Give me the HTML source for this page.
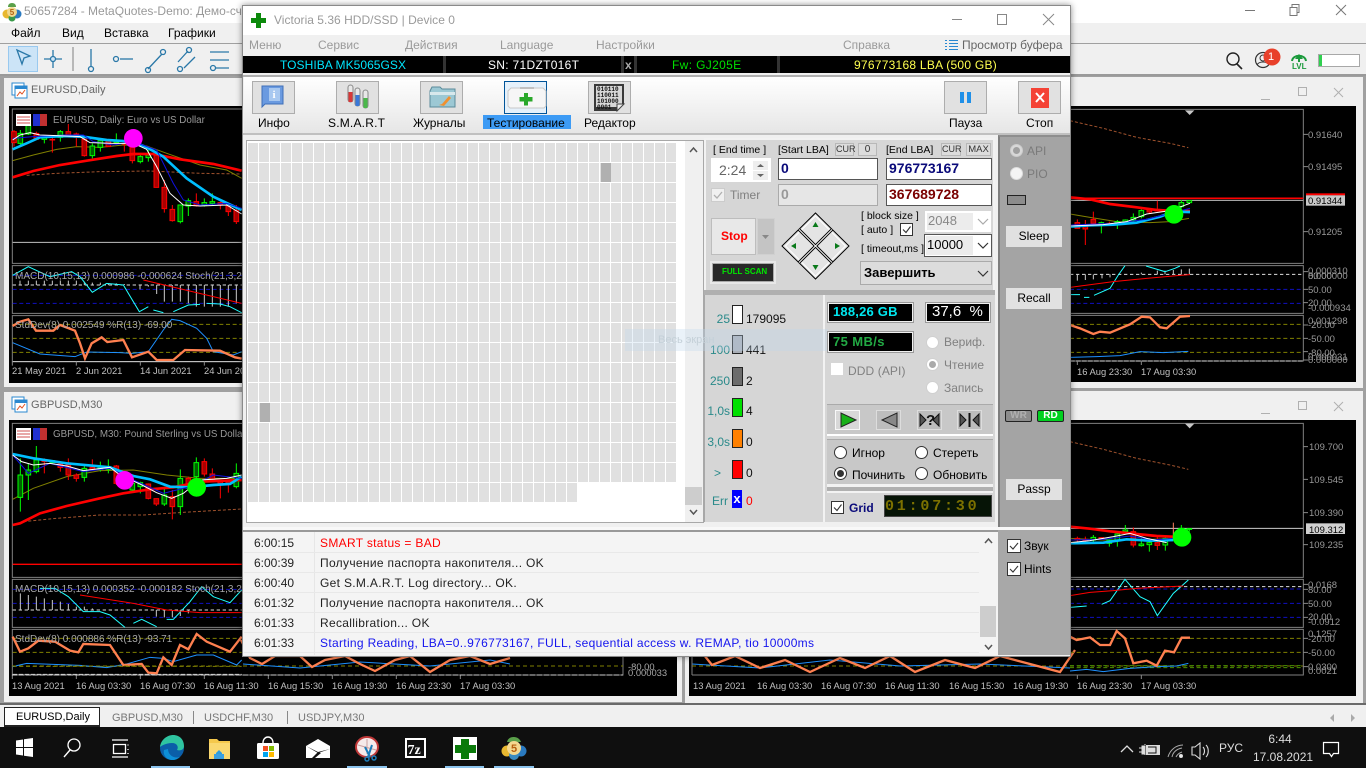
<!DOCTYPE html>
<html lang="ru"><head><meta charset="utf-8"><title>Victoria</title>
<style>
html,body{margin:0;padding:0;width:1366px;height:768px;overflow:hidden;background:#a0a0a0}
body{position:relative;font:12px/14px "Liberation Sans","Noto Sans CJK SC",sans-serif;color:#000}
div,span,svg{position:absolute;box-sizing:border-box}
.t{white-space:nowrap}
.btn{background:#e1e1e1;border:1px solid #adadad}
.g{color:#808080}
.rad{width:13px;height:13px;border-radius:50%;background:#fff;border:1px solid #8a8a8a}
.rad.d{background:#f3f3f3;border-color:#d0d0d0}
.dot{width:7px;height:7px;border-radius:50%}
.cb{width:14px;height:14px;background:#fff;border:1px solid #333}
.blk{background:#000;border:1px solid #f0f0f0;outline:1px solid #9a9a9a}
.cell{width:10px;height:19px;background:#b0b0b0}
.sm{font-size:10px;line-height:11px;text-align:center;background:#dcdcdc;border:1px solid #b8b8b8;color:#333}
.inp{background:#fff;border:1px solid #555;font-weight:bold;font-size:14px;line-height:18px;padding-left:2px}
.log{left:320px;font-size:12px;letter-spacing:.32px;white-space:nowrap}
.tm{left:254px;font-size:12px;white-space:nowrap;color:#222}
.sep{height:1px;background:#e8e8e8;left:244px;width:735px}
.side{left:1006px;width:56px;height:21px;background:#e1e1e1;text-align:center;line-height:21px;font-size:12px}
.num{left:746px;font-size:12px;color:#111}
.lab{width:30px;text-align:right;left:700px;font-size:12px;color:#2a8a8a}
.box{left:732px;width:11px;height:19px;border:1px solid #222}
.tab{top:711px;color:#777;font-size:11px;white-space:nowrap}
.v{width:1px;top:711px;height:13px;background:#888}
.br{font-size:10.5px}
</style></head><body>

<!-- MT4 chrome -->
<div style="left:0;top:0;width:1366px;height:23px;background:#fff"></div>
<div style="left:0;top:23px;width:1366px;height:20px;background:#f0f0f0"></div>
<div style="left:0;top:43px;width:1366px;height:1px;background:#a0a0a0"></div>
<div style="left:0;top:44px;width:1366px;height:30px;background:#f0f0f0"></div>
<div style="left:0;top:74px;width:1366px;height:2px;background:#9a9a9a"></div>

<svg style="left:2px;top:2px" width="20" height="20" viewBox="0 0 20 20"><path d="M10 1c3 0 4 2 4 4H6c0-2 1-4 4-4z" fill="#5aa04a"/><circle cx="5" cy="12" r="4.5" fill="#e8b830"/><circle cx="15" cy="12" r="4.5" fill="#2a7ac0"/><circle cx="10" cy="16" r="3.5" fill="#3a9a4a"/><circle cx="10" cy="10" r="5" fill="#f0d890"/><text x="10" y="13" font-size="8" font-weight="bold" text-anchor="middle" fill="#b06010" font-family="Liberation Sans">5</text></svg>
<div class="t" style="left:24px;top:4px;color:#999;font-size:12px">50657284 - MetaQuotes-Demo: Демо-счёт</div>
<div class="t" style="left:11px;top:26px">Файл</div>
<div class="t" style="left:62px;top:26px">Вид</div>
<div class="t" style="left:104px;top:26px">Вставка</div>
<div class="t" style="left:168px;top:26px">Графики</div>

<div style="left:8px;top:46px;width:30px;height:26px;background:#cce4f7;border:1px solid #99c9ef"></div>
<svg style="left:0;top:44px" width="243" height="30" viewBox="0 0 243 30" fill="none" stroke="#2a78a8" stroke-width="1.3">
<path d="M17 6l13 6-6 2-2 6z"/>
<path d="M53 6v18M44 15h18"/><circle cx="53" cy="15" r="2.5" fill="#cfe6f7"/>
<path d="M73 3v24" stroke="#999"/>
<path d="M91 5v18"/><circle cx="91" cy="25" r="2.5"/>
<path d="M120 15h13"/><circle cx="116" cy="15" r="2.5"/>
<path d="M148 25l14-15"/><circle cx="148" cy="26" r="2.5"/><circle cx="163" cy="8" r="2.5"/>
<path d="M178 18l10-11M184 24l11-11"/><circle cx="189" cy="6" r="2.5"/><circle cx="180" cy="25" r="2.5"/>
<path d="M210 8h19M210 16h19M216 24h13"/><circle cx="213" cy="24" r="2.5"/>
</svg>

<svg style="left:1240px;top:0" width="126" height="23" fill="none" stroke="#777"><path d="M5 10.500h10"/><path d="M50 7.500h7v8h-7zM52 7V4.500h7v8h-2"/><path d="M96 5l10 10M106 5l-10 10"/></svg>
<svg style="left:1222px;top:48px" width="144" height="26" viewBox="0 0 144 26" fill="none">
<circle cx="11" cy="11" r="6" stroke="#222" stroke-width="1.4"/><path d="M15 16l5 5" stroke="#222" stroke-width="1.6"/>
<circle cx="41" cy="12" r="7.500" stroke="#333" stroke-width="1.2"/><circle cx="41" cy="10" r="3" stroke="#333"/><path d="M35 17c2-4 10-4 12 0" stroke="#333"/>
<circle cx="50" cy="9" r="8.500" fill="#e8402a"/>
<path d="M70 13c1-7 13-7 14 0" stroke="#1b9a3c" stroke-width="2"/><path d="M77 6l-4 5h8z" fill="#1b9a3c"/><path d="M77 10v4" stroke="#1b9a3c" stroke-width="2"/>
<rect x="96.500" y="6.500" width="41" height="12" fill="#fff" stroke="#a8a8a8"/><rect x="97" y="7" width="3" height="11" fill="#30d050"/>
</svg>
<div class="t" style="left:1268px;top:50px;color:#fff;font-size:11px">1</div>
<div class="t" style="left:1292px;top:62px;color:#1b9a3c;font-size:8px;line-height:9px;font-weight:bold">LVL</div>

<!-- chart windows -->
<div style="left:3px;top:77px;width:680px;height:311px;background:#f0f0f0;border:1px solid #a0a0a0"></div>
<div style="left:685px;top:77px;width:678px;height:311px;background:#f0f0f0"></div>
<div style="left:3px;top:391px;width:680px;height:312px;background:#f0f0f0;border:1px solid #a0a0a0"></div>
<div style="left:685px;top:391px;width:678px;height:312px;background:#f0f0f0"></div>
<div style="left:9px;top:106px;width:668px;height:277px;background:#000"></div>
<div style="left:689px;top:106px;width:667px;height:276px;background:#000"></div>
<div style="left:9px;top:420px;width:668px;height:276px;background:#000"></div>
<div style="left:689px;top:420px;width:667px;height:276px;background:#000"></div>

<div class="t" style="left:31px;top:83px;color:#666;font-size:11px;letter-spacing:.05px">EURUSD,Daily</div>
<div class="t" style="left:31px;top:398px;color:#666;font-size:11px;letter-spacing:.05px">GBPUSD,M30</div>
<svg style="left:11px;top:82px" width="17" height="17" viewBox="0 0 17 17"><rect x="1" y="1" width="12" height="12" fill="#fff" stroke="#2a88d0"/><rect x="4" y="4" width="12" height="12" fill="#fff" stroke="#2a88d0"/><rect x="4" y="4" width="12" height="3" fill="#2a88d0"/><path d="M6 14l3-4 2 2 3-4" stroke="#e05020" fill="none"/></svg>
<svg style="left:11px;top:396px" width="17" height="17" viewBox="0 0 17 17"><rect x="1" y="1" width="12" height="12" fill="#fff" stroke="#2a88d0"/><rect x="4" y="4" width="12" height="12" fill="#fff" stroke="#2a88d0"/><rect x="4" y="4" width="12" height="3" fill="#2a88d0"/><path d="M6 14l3-4 2 2 3-4" stroke="#e05020" fill="none"/></svg>
<svg style="left:1256px;top:84px" width="96" height="20" fill="none" stroke="#b0b0b0"><path d="M5 15.500h9"/><path d="M42.500 3.500h8v8h-8z"/><path d="M78 4l9 9M87 4l-9 9"/></svg>
<svg style="left:1256px;top:398px" width="96" height="20" fill="none" stroke="#b0b0b0"><path d="M5 15.500h9"/><path d="M42.500 3.500h8v8h-8z"/><path d="M78 4l9 9M87 4l-9 9"/></svg>

<svg style="left:0;top:0" width="1366" height="768" viewBox="0 0 1366 768" font-family="Liberation Sans" font-size="10">
<!-- ========== TOP LEFT ========== -->
<g transform="translate(0,90) scale(.33333)" fill="none" stroke-width="3">
<path d="M37 57H1869V520H37zM37 527H1869V670H37zM37 677H1869V815H37z" stroke="#808080"/>
<path d="M38 457H725" stroke="#c0c0c0"/>
<path d="M80 256L170 250 300 245 450 243 600 250 725 252" stroke="#a0522d" stroke-dasharray="9 6"/>
<path d="M38 212L100 195 170 178 230 170 300 172 370 165 440 168 500 190 600 225 680 240 725 265" stroke="#808000"/>
<path d="M42 120V170M109 125V150M157 135V188M205 102V135M229 128V170M253 135V200M325 150V170M373 155V185M397 165V220M469 195V292M493 270V368M517 345V395M589 310V350M661 335V358M685 340V378M709 345V402" stroke="#f00"/>
<path d="M35 125h14V158h-14zM102 130h14V148h-14zM150 148h14V150h-14zM198 125h14V135h-14zM222 132h14V142h-14zM246 148h14V197h-14zM318 152h14V170h-14zM366 160h14V162h-14zM390 172h14V212h-14zM462 195h14V292h-14zM486 292h14V356h-14zM510 358h14V392h-14zM582 335h14V347h-14zM654 338h14V345h-14zM678 348h14V365h-14zM702 362h14V395h-14z" stroke="#f00" fill="#a80000"/>
<path d="M61 120V165M85 100V135M133 135V160M181 120V155M277 160V205M301 145V185M349 130V160M421 195V220M445 180V215M541 345V400M565 325V378M613 325V350M637 310V345" stroke="#0f0"/>
<path d="M54 130h14V160h-14zM78 105h14V132h-14zM126 140h14V148h-14zM174 125h14V142h-14zM270 168h14V197h-14zM294 152h14V172h-14zM342 150h14V158h-14zM414 200h14V215h-14zM438 195h14V203h-14zM534 345h14V395h-14zM558 332h14V348h-14zM606 338h14V345h-14zM630 335h14V340h-14z" stroke="#0f0" fill="#006000"/>
<path d="M38 262L100 243 180 225 260 212 350 198 400 192 460 192 540 208 640 222 725 242" stroke="#f00" stroke-width="8"/>
<path d="M38 178L80 160 120 142 190 138 250 140 320 150 400 155 440 172 490 200 560 265 640 320 725 360" stroke="#00bfff" stroke-width="8"/>
<path d="M38 145L100 140 200 135 250 135 280 155 340 165 400 155 470 180 520 280 550 330 600 345 680 340 725 355" stroke="#1010e0" stroke-width="3"/>
<path d="M38 150L60 135 90 128 120 135 200 138 240 140 270 158 340 160 400 160 440 178 470 230 510 310 550 345 600 348 680 345 725 372" stroke="#fff" stroke-width="3"/>
<path d="M38 556H725M38 598H725M38 640H725" stroke="#1010c0" stroke-dasharray="12 8"/>
<path d="M38 585H725" stroke="#ddd" stroke-dasharray="10 8"/>
<path d="M60 585V572M85 585V572M109 585V572M133 585V572M157 585V572M181 585V572M205 585V572M229 585V572M253 585V575M277 585V578M301 585V578M325 585V580M349 585V580M373 585V582M420 585V598M445 585V590M470 585V612M493 585V635M517 585V635M541 585V635M565 585V640M589 585V650M613 585V650M637 585V650M661 585V650M685 585V650M709 585V640" stroke="#ccc"/>
<path d="M38 556L85 530 150 560 215 545 240 560 277 607 320 580 370 585 418 665 445 650M460 660L490 668M520 665L565 645 600 643M620 640L660 642 690 650 725 668" stroke="#2ff"/>
<path d="M430 570L725 640" stroke="#f00"/>
<path d="M38 703H725M38 745H725M38 787H725" stroke="#808000" stroke-dasharray="12 8"/>
<path d="M38 815H725" stroke="#ccc"/>
<path d="M38 758L120 792 225 800 260 786 360 788 395 790 445 785 490 720 515 688 540 692 590 715 620 745 640 785 700 795 725 785" stroke="#1e90ff"/>
<path d="M38 708L60 695 85 688 108 722 160 722 180 705 225 722 240 760 255 805 275 760 305 742 322 756 370 750 396 802 445 785 470 810 520 810 555 780 660 782 705 802 725 806" stroke="#ff8050" stroke-width="7"/>
<path d="M37 815v12M229 815v12M421 815v12M613 815v12" stroke="#888"/>
<circle cx="400" cy="145" r="28" fill="#f0f" stroke="none"/>
</g>
<g fill="#a8a8a8" stroke="none">
<text x="15" y="279">MACD(10,15,13)  0.000986 -0.000624 Stoch(21,3,2) 3</text>
<text x="15" y="328">StdDev(8) 0.002549 %R(13) -69.00</text>
<text x="12" y="374" font-size="9.400" fill="#c0c0c0">21 May 2021</text><text x="76" y="374" font-size="9.400" fill="#c0c0c0">2 Jun 2021</text><text x="140" y="374" font-size="9.400" fill="#c0c0c0">14 Jun 2021</text><text x="204" y="374" font-size="9.400" fill="#c0c0c0">24 Jun 2021</text>
<text x="53" y="123" font-size="9.800" fill="#999">EURUSD, Daily:  Euro vs US Dollar</text>
<text x="53" y="437" font-size="9.800" fill="#999">GBPUSD, M30:  Pound Sterling vs US Dollar</text>
</g>
<g>
<rect x="16" y="114" width="15" height="12" fill="#fff"/><path d="M17 117h13M17 120h13M17 123h13" stroke="#d05050"/>
<rect x="33" y="114" width="7" height="12" fill="#2030d0"/><rect x="40" y="114" width="7" height="12" fill="#c03030"/>
<rect x="16" y="428" width="15" height="12" fill="#fff"/><path d="M17 431h13M17 434h13M17 437h13" stroke="#d05050"/>
<rect x="33" y="428" width="7" height="12" fill="#2030d0"/><rect x="40" y="428" width="7" height="12" fill="#c03030"/>
</g>

<!-- ========== BOTTOM LEFT ========== -->
<g transform="translate(0,380) scale(.33333)" fill="none" stroke-width="3">
<path d="M37 130H1869V592H37zM37 598H1869V742H37zM37 748H1869V885H37z" stroke="#808080"/>
<path d="M38 553H725" stroke="#f00" stroke-width="4"/>
<path d="M70 425L170 415 300 405 430 405 550 397 725 387" stroke="#a0522d" stroke-dasharray="9 6"/>
<path d="M38 358L100 325 200 290 300 272 400 270 500 285 600 295 725 295" stroke="#808000"/>
<path d="M133 235V280M181 245V275M205 235V300M229 280V305M277 238V270M349 255V315M373 280V310M445 310V358M469 355V378M517 330V418M565 290V325M613 235V290M637 265V300M661 300V355M685 300V338" stroke="#f00"/>
<path d="M126 240h14V245h-14zM174 252h14V262h-14zM198 255h14V285h-14zM222 285h14V295h-14zM270 262h14V268h-14zM342 258h14V310h-14zM366 285h14V300h-14zM438 312h14V355h-14zM462 356h14V372h-14zM510 350h14V380h-14zM558 295h14V320h-14zM606 245h14V282h-14zM630 282h14V298h-14zM654 305h14V310h-14zM678 305h14V310h-14z" stroke="#f00" fill="#a80000"/>
<path d="M61 235V395M85 250V360M109 198V280M157 240V250M253 255V305M301 245V275M325 238V280M397 305V335M421 305V340M493 320V378M541 268V405M589 232V350M709 250V325" stroke="#0f0"/>
<path d="M54 285h14V352h-14zM78 270h14V285h-14zM102 240h14V275h-14zM150 242h14V248h-14zM246 265h14V292h-14zM294 262h14V268h-14zM318 262h14V268h-14zM390 310h14V330h-14zM414 308h14V320h-14zM486 345h14V372h-14zM534 295h14V380h-14zM582 248h14V290h-14zM702 280h14V320h-14z" stroke="#0f0" fill="#006000"/>
<path d="M38 435L60 430 120 400 200 378 300 355 370 340 450 328 520 322 600 305 725 300" stroke="#f00" stroke-width="8"/>
<path d="M38 222L100 235 200 250 330 262 400 288 450 298 510 320 570 322 640 315 690 312 725 290" stroke="#00bfff" stroke-width="8"/>
<path d="M38 225L85 280 150 250 250 275 330 265 400 300 490 340 570 320 640 285 725 295" stroke="#1010e0"/>
<path d="M38 225L65 245 100 255 150 250 200 258 250 272 330 262 360 285 420 312 470 338 515 355 550 340 600 300 680 295 725 285" stroke="#fff"/>
<path d="M38 628H725M38 670H725M38 712H725" stroke="#1010c0" stroke-dasharray="12 8"/>
<path d="M38 690H725" stroke="#ddd" stroke-dasharray="10 8"/>
<path d="M61 690V640M85 690V645M109 690V650M133 690V655M157 690V660M181 690V665M205 690V672M229 690V680M253 690V680M277 690V685M469 690V710M493 690V712M517 690V712M541 690V708M565 690V700" stroke="#ccc"/>
<path d="M120 625L165 625 205 650 250 695 300 695 330 705 375 742M400 730L425 718 470 740M500 718L520 718 570 665 605 620 640 650 690 668 725 630" stroke="#2ff"/>
<path d="M240 645L400 670 500 690 600 698 725 698" stroke="#f00"/>
<path d="M38 775H725M38 817H725M38 859H725" stroke="#808000" stroke-dasharray="12 8"/>
<path d="M38 883H725" stroke="#ccc" stroke-dasharray="14 4"/>
<path d="M38 860L80 850 240 856 320 863 380 852 450 832 490 835 520 845 590 825 640 825 710 855 725 840" stroke="#1e90ff"/>
<path d="M38 770L60 815 85 805 115 782 165 785 210 812 235 817 250 792 330 795 370 855 425 852 445 878 470 880 490 832 515 855 540 795 565 808 590 762 620 785 690 815 725 770" stroke="#ff8050" stroke-width="7"/>
<path d="M37 885v12M229 885v12M421 885v12M613 885v12M805 885v12M997 885v12M1189 885v12M1381 885v12" stroke="#888"/>
<circle cx="374" cy="301" r="28" fill="#f0f" stroke="none"/>
<circle cx="590" cy="322" r="28" fill="#0f0" stroke="none"/>
</g>
<g fill="#a8a8a8">
<text x="15" y="592">MACD(10,15,13)  0.000352 -0.000182 Stoch(21,3,2) 2</text>
<text x="15" y="642">StdDev(8) 0.000886 %R(13) -93.71</text>
<text x="628" y="670" font-size="9.400">-80.00</text><text x="628" y="676" font-size="9.400">0.000033</text>
<g font-size="9.400" fill="#c0c0c0">
<text x="12" y="689">13 Aug 2021</text><text x="76" y="689">16 Aug 03:30</text><text x="140" y="689">16 Aug 07:30</text><text x="204" y="689">16 Aug 11:30</text><text x="268" y="689">16 Aug 15:30</text><text x="332" y="689">16 Aug 19:30</text><text x="396" y="689">16 Aug 23:30</text><text x="460" y="689">17 Aug 03:30</text>
<text x="693" y="689">13 Aug 2021</text><text x="757" y="689">16 Aug 03:30</text><text x="821" y="689">16 Aug 07:30</text><text x="885" y="689">16 Aug 11:30</text><text x="949" y="689">16 Aug 15:30</text><text x="1013" y="689">16 Aug 19:30</text><text x="1077" y="689">16 Aug 23:30</text><text x="1141" y="689">17 Aug 03:30</text>
</g>
</g>
<!-- strips under Victoria -->
<g fill="none" stroke-width="1">
<path d="M12 675H623M692 675H1303" stroke="#ccc" stroke-dasharray="5 2"/>
<path d="M12 666H623M692 666H1303" stroke="#808000" stroke-dasharray="4 3"/>
<path d="M243 664L300 668 360 662 430 666 490 660 510 664" stroke="#1e90ff"/>
<path d="M692 664L760 668 830 660 900 666 980 664 1070 668" stroke="#1e90ff"/>
<path d="M241 640L250 658 262 664 275 656 300 656 312 667 325 660 345 656 360 664 375 671 395 660 410 656 430 672 450 660 470 656 490 664 510 658" stroke="#ff8050" stroke-width="2.300"/>
<path d="M692 640L712 665 735 656 760 668 785 660 810 672 840 658 865 668 890 656 915 672 945 660 975 668 1000 656 1030 664 1060 672 1075 650" stroke="#ff8050" stroke-width="2.300"/>
</g>
<path d="M692 423H1071M692 577H1071M692 579H1071M692 627H1071M692 629H1071M692 423V675M692 675H1303" fill="none" stroke="#808080"/>
<path d="M692 109H1071M692 263H1071M692 265H1071M692 109V361" fill="none" stroke="#808080"/>

<!-- ========== TOP RIGHT ========== -->
<g transform="translate(1070,80) scale(.33333)" fill="none" stroke-width="3">
<path d="M0 88H700V550H0M0 557H700V700H0M0 706H700V843H0" stroke="#808080"/>
<path d="M0 355H700" stroke="#f00" stroke-width="5"/>
<path d="M0 361H700" stroke="#bbb"/>
<path d="M345 91h28l-14 14z" fill="#c8c8c8" stroke="none"/>
<path d="M0 122L100 145 200 172 300 190 355 203" stroke="#a0522d" stroke-dasharray="9 6"/>
<path d="M0 402L60 412 140 425 240 428 300 425 357 415" stroke="#808000"/>
<path d="M22 418V445M46 420V495M70 395V432M118 425V438M238 385V400M262 362V395" stroke="#f00"/>
<path d="M15 428h14V445h-14zM39 435h14V447h-14zM63 418h14V430h-14zM111 430h14V434h-14zM231 390h14V396h-14zM255 388h14V393h-14z" stroke="#f00" fill="#a80000"/>
<path d="M94 425V460M142 420V447M166 418V432M190 400V425M214 388V415M334 360V385M358 360V370" stroke="#0f0"/>
<path d="M87 428h14V436h-14zM135 425h14V430h-14zM159 420h14V426h-14zM183 412h14V420h-14zM207 392h14V410h-14zM327 368h14V380h-14zM351 362h14V368h-14z" stroke="#0f0" fill="#004000"/>
<path d="M0 352L60 358 120 372 200 382 260 390 300 392 360 393" stroke="#f00" stroke-width="8"/>
<path d="M0 440L60 436 130 434 200 428 270 410 310 395 360 396" stroke="#00bfff" stroke-width="8"/>
<path d="M0 435L130 430 230 418 320 395 360 385" stroke="#1010e0"/>
<path d="M0 438L100 434 170 425 230 402 300 392 360 370" stroke="#fff"/>
<circle cx="312" cy="403" r="28" fill="#0f0" stroke="none"/>
<path d="M0 628H700M0 670H700" stroke="#1010c0" stroke-dasharray="12 8"/>
<path d="M0 583H700" stroke="#ddd" stroke-dasharray="10 8"/>
<path d="M22 583V602M46 583V600M70 583V598M96 583V595M120 583V592M214 583V578M262 583V572M285 583V572M310 583V570M334 583V568M358 583V566" stroke="#ccc"/>
<path d="M0 644L30 644M42 652L58 652M72 646L120 625 145 585 165 557M228 558L285 575 315 565 330 558" stroke="#2ff"/>
<path d="M0 622L130 605 230 595 330 586 360 584" stroke="#f00"/>
<path d="M0 733H700M0 775H700M0 817H700" stroke="#808000" stroke-dasharray="12 8"/>
<path d="M0 843H700" stroke="#ddd" stroke-dasharray="14 4"/>
<path d="M0 832L80 830 150 827 210 815 280 818 355 814" stroke="#1e90ff"/>
<path d="M0 735L30 745 70 762 90 755 120 758 180 733 215 710 240 712 270 742 290 745 330 710 360 708" stroke="#ff8050" stroke-width="7"/>
<path d="M22 843v12M214 843v12M700 163h14M700 260h14M700 455h14M700 575h14M700 628h14M700 668h14M700 735h14M700 775h14M700 815h14M700 840h14" stroke="#888"/>
<rect x="708" y="340" width="117" height="6" fill="#f00" stroke="none"/>
<rect x="708" y="346" width="117" height="31" fill="#c8c8c8" stroke="none"/>
</g>
<g fill="#999" font-size="9.500">
<text x="1308" y="138">0.91640</text><text x="1308" y="170">0.91495</text><text x="1308" y="235">0.91205</text>
<text x="1308" y="204" fill="#000">0.91344</text>
<text x="1308" y="274">0.000310</text><text x="1308" y="279">80.00</text><text x="1308" y="279">0.000000</text><text x="1308" y="293">50.00</text><text x="1308" y="306">20.00</text><text x="1308" y="311">-0.000934</text>
<text x="1308" y="324">0.001298</text><text x="1308" y="328">-20.00</text><text x="1308" y="342">-50.00</text><text x="1308" y="356">-80.00</text><text x="1308" y="360">0.000031</text><text x="1308" y="363">0.000000</text>
<text x="1077" y="375" font-size="9.400" fill="#c0c0c0">16 Aug 23:30</text><text x="1141" y="375" font-size="9.400" fill="#c0c0c0">17 Aug 03:30</text>
</g>

<!-- ========== BOTTOM RIGHT ========== -->
<g transform="translate(1070,390) scale(.33333)" fill="none" stroke-width="3">
<path d="M0 100H700V562H0M0 568H700V712H0M0 718H700V855H0" stroke="#808080"/>
<path d="M0 415H700" stroke="#ccc"/>
<path d="M345 101h28l-14 14z" fill="#c8c8c8" stroke="none"/>
<path d="M0 155L100 178 200 205 300 225 355 238" stroke="#a0522d" stroke-dasharray="9 6"/>
<path d="M0 445L100 450 200 450 310 445" stroke="#808000"/>
<path d="M22 440V455M46 440V456M94 442V450M190 412V472M262 440V480" stroke="#f00"/>
<path d="M15 445h14V450h-14zM39 448h14V452h-14zM87 443h14V448h-14zM183 425h14V465h-14zM255 458h14V466h-14z" stroke="#f00" fill="#a80000"/>
<path d="M310 398V440" stroke="#ff8060"/>
<path d="M70 435V458M118 448V470M142 425V470M166 405V425M214 445V470M238 445V485M286 440V482M334 405V420M358 415V425" stroke="#0f0"/>
<path d="M63 442h14V450h-14zM111 450h14V460h-14zM135 432h14V450h-14zM159 420h14V425h-14zM207 462h14V467h-14zM231 458h14V464h-14zM279 445h14V465h-14zM327 415h14V418h-14zM351 416h14V418h-14z" stroke="#0f0" fill="#004000"/>
<path d="M0 410L60 416 120 424 200 432 260 438 310 440" stroke="#f00" stroke-width="8"/>
<path d="M0 460L100 458 170 448 240 452 310 450" stroke="#00bfff" stroke-width="8"/>
<path d="M0 450L100 448 180 438 250 450 310 445" stroke="#1010e0"/>
<path d="M0 458L60 452 130 440 180 430 230 445 290 458" stroke="#fff"/>
<circle cx="336" cy="442" r="28" fill="#0f0" stroke="none"/>
<path d="M0 597H700M0 640H700M0 682H700" stroke="#1010c0" stroke-dasharray="12 8"/>
<path d="M0 590H700" stroke="#ddd" stroke-dasharray="10 8"/>
<path d="M0 652L50 648M95 643L120 632 165 568 210 620 240 635 262 677 310 610 355 570" stroke="#2ff"/>
<path d="M0 617L60 607 130 602 200 595 340 588" stroke="#f00"/>
<path d="M0 745H700M0 787H700" stroke="#808000" stroke-dasharray="12 8"/>
<path d="M0 827H700M0 833H700" stroke="#4a9000" stroke-dasharray="12 8"/>
<path d="M0 843L50 838 100 845 180 835 260 830 320 828 355 820" stroke="#1e90ff"/>
<path d="M0 740L20 750 60 742 90 765 120 765 140 723 165 745 190 820 230 812 260 827 285 782 312 787 335 743 360 743" stroke="#ff8050" stroke-width="7"/>
<path d="M22 855v12M214 855v12M700 170h14M700 268h14M700 368h14M700 464h14M700 583h14M700 598h14M700 640h14M700 682h14M700 745h14M700 787h14M700 830h14" stroke="#888"/>
<rect x="708" y="400" width="117" height="32" fill="#d0d0d0" stroke="none"/>
</g>
<g fill="#999" font-size="9.500">
<text x="1309" y="450">109.700</text><text x="1309" y="483">109.545</text><text x="1309" y="516">109.390</text><text x="1309" y="548">109.235</text>
<text x="1309" y="533" fill="#000">109.312</text>
<text x="1308" y="588">0.0168</text><text x="1308" y="593">80.00</text><text x="1308" y="607">50.00</text><text x="1308" y="620">20.00</text><text x="1308" y="625">-0.0912</text>
<text x="1308" y="637">0.1257</text><text x="1308" y="642">-20.00</text><text x="1308" y="656">-50.00</text><text x="1308" y="670">0.0300</text><text x="1308" y="674">0.0021</text>
</g>
</svg>

<!-- tabs -->
<div style="left:0;top:703px;width:1366px;height:2px;background:#6a6a6a"></div>
<div style="left:0;top:705px;width:1366px;height:22px;background:#f0f0f0"></div>
<div style="left:4px;top:707px;width:96px;height:20px;background:#fff;border:1px solid #222;border-bottom:2px solid #222"></div>
<div class="t" style="left:16px;top:710px;color:#000;font-size:11px">EURUSD,Daily</div>
<div class="tab" style="left:112px">GBPUSD,M30</div><div class="v" style="left:193px"></div>
<div class="tab" style="left:204px">USDCHF,M30</div><div class="v" style="left:287px"></div>
<div class="tab" style="left:298px">USDJPY,M30</div>
<svg style="left:1325px;top:712px" width="32" height="12"><path d="M9 2L5 6l4 4zM26 2l4 4-4 4z" fill="#aaa"/></svg>

<!-- taskbar -->
<div style="left:0;top:727px;width:1366px;height:41px;background:#0f0f0f"></div>
<div style="left:151px;top:766px;width:39px;height:2px;background:#8cc4ee"></div>
<div style="left:347px;top:766px;width:40px;height:2px;background:#8cc4ee"></div>
<div style="left:445px;top:766px;width:39px;height:2px;background:#8cc4ee"></div>
<div style="left:494px;top:766px;width:40px;height:2px;background:#8cc4ee"></div>
<svg style="left:0;top:727px" width="560" height="41" viewBox="0 0 560 41">
<path d="M16 13.500l7-1v7.500h-7zM24 12.300l9-1.300v9h-9zM16 21h7v7.500l-7-1zM24 21h9v9l-9-1.300z" fill="#fff"/>
<circle cx="74" cy="18" r="6" fill="none" stroke="#fff" stroke-width="1.300"/><path d="M70 23l-6 7" stroke="#fff" stroke-width="1.400"/>
<path d="M112 13h16M112 30h16M113.500 17.500h12v9h-12zM128 17.500v1M128 22v1M128 26v1" fill="none" stroke="#fff" stroke-width="1.300"/>
<circle cx="172" cy="21" r="12" fill="#0b5ea8"/><path d="M160 20c1-8 8-12 13-12 7 0 11 5 11 11 0 4-4 5-7 4 2-3 0-7-5-7-6 0-11 3-12 4z" fill="#2fc4a0"/><path d="M168 22c0 6 6 10 12 8-3 3-8 4-12 2-3-2-5-5-4-9z" fill="#0d8fd8"/>
<path d="M209 12h8l2 2h11v5h-21z" fill="#f5c84c"/><rect x="209" y="16" width="21" height="16" fill="#fad870"/><path d="M216 26l3-3 3 3v6h-6z" fill="#2c9ce0"/><rect x="214" y="27" width="10" height="5" fill="#3a9fe0"/>
<rect x="257" y="16" width="22" height="16" rx="1.500" fill="#fff"/><path d="M263 16c0-8 10-8 10 0" fill="none" stroke="#fff" stroke-width="1.400"/><rect x="263" y="19" width="5" height="5" fill="#f25022"/><rect x="269" y="19" width="5" height="5" fill="#7fba00"/><rect x="263" y="25" width="5" height="5" fill="#00a4ef"/><rect x="269" y="25" width="5" height="5" fill="#ffb900"/>
<path d="M306 19l12-7 12 7v12h-24z" fill="#fff"/><path d="M306 19l12 7 12-4-12 3z" fill="#111"/><path d="M318 25l-6 6h3l6-5z" fill="#111"/>
<ellipse cx="367" cy="20" rx="11" ry="10" fill="#f6eaea" stroke="#c03838" stroke-width="2"/><path d="M367 12v15M358 18l18 5" stroke="#c9a0a0"/><path d="M365 20l5 10M372 18l-4 12" stroke="#1c7cb8" stroke-width="2"/><circle cx="367" cy="32" r="2" fill="none" stroke="#1c7cb8" stroke-width="1.500"/><circle cx="374" cy="31" r="2" fill="none" stroke="#1c7cb8" stroke-width="1.500"/>
<rect x="405" y="11" width="21" height="20" fill="#fff"/><rect x="407" y="13" width="17" height="16" fill="#111"/>
<text x="407.500" y="27" font-family="Liberation Serif" font-weight="bold" font-size="14" fill="#fff">7z</text>
<rect x="453" y="10" width="24" height="23" fill="#fff"/><path d="M461 12h8v6h7v8h-7v6h-8v-6h-6v-8h6z" fill="#0a7a0a"/>
<path d="M507 15c1-4 4-5 7-5s6 2 7 5z" fill="#5aa04a"/><circle cx="507" cy="24" r="5.500" fill="#e8b830"/><circle cx="521" cy="24" r="5.500" fill="#2a7ac0"/><circle cx="514" cy="28" r="5" fill="#3a8ac0"/><circle cx="514" cy="21" r="7" fill="#f4d890"/><text x="514" y="25" text-anchor="middle" font-family="Liberation Sans" font-weight="bold" font-size="11" fill="#b86010">5</text>
</svg>
<svg style="left:1110px;top:727px" width="240" height="41" viewBox="0 0 240 41" fill="none" stroke="#ddd">
<path d="M11 25l6-6 6 6" stroke-width="1.300"/>
<path d="M32 19h3v8h-3zM29 21h3M29 25h3M35 17v1M35 28v-1" fill="#ddd"/><rect x="36.500" y="18.500" width="13" height="9" fill="#ddd"/><path d="M38 20h8v6h-8" stroke="#111"/>
<path d="M58 30c2-7 8-12 15-12M62 30c1-5 5-8 10-9M66 30c1-2 3-4 6-5" stroke="#aaa"/><circle cx="71" cy="29" r="1.500" fill="#eee"/>
<path d="M82 20h3l5-4v16l-5-4h-3zM93 20c2 2 2 6 0 8M96 18c3 3 3 9 0 12" stroke-width="1.100"/>
<path d="M213.500 15.500h15v11h-5l-2 3-2-3h-6z" stroke="#fff" stroke-width="1.200"/>
</svg>
<div class="t" style="left:1219px;top:741px;color:#ddd;font-size:12px">РУС</div>
<div class="t" style="left:1266px;top:732px;color:#ddd;font-size:12px;width:28px;text-align:center">6:44</div>
<div class="t" style="left:1253px;top:750px;color:#ddd;font-size:12px">17.08.2021</div>

<!-- ========= VICTORIA ========= -->
<div style="left:242px;top:5px;width:829px;height:652px;background:#f0f0f0;border:1px solid #8a8a8a;box-shadow:0 0 6px rgba(0,0,0,.45)"></div>
<div style="left:243px;top:6px;width:827px;height:29px;background:#fff"></div>
<svg style="left:251px;top:13px" width="15" height="15"><path d="M5 0h5v5h5v5h-5v5H5v-5H0V5h5z" fill="#0c8a0c"/></svg>
<div class="t" style="left:274px;top:13px;color:#9a9a9a;font-size:12px;letter-spacing:.02px">Victoria 5.36 HDD/SSD | Device 0</div>
<svg style="left:950px;top:10px" width="110" height="20" fill="none" stroke="#888"><path d="M2 9.500h10"/><path d="M47.500 4.500h9v10h-9z"/><path d="M93 4l11 11M104 4l-11 11"/></svg>
<div class="t" style="left:249px;top:38px;color:#9a9a9a">Меню</div>
<div class="t" style="left:318px;top:38px;color:#9a9a9a">Сервис</div>
<div class="t" style="left:405px;top:38px;color:#9a9a9a">Действия</div>
<div class="t" style="left:500px;top:38px;color:#9a9a9a">Language</div>
<div class="t" style="left:596px;top:38px;color:#9a9a9a">Настройки</div>
<div class="t" style="left:843px;top:38px;color:#9a9a9a">Справка</div>
<svg style="left:945px;top:39px" width="13" height="13"><path d="M0 1.500h2M4 1.500h9M0 4.500h2M4 4.500h9M0 7.500h2M4 7.500h9M0 10.500h2M4 10.500h9" stroke="#2a88d0"/></svg>
<div class="t" style="left:962px;top:38px;color:#666">Просмотр буфера</div>

<div style="left:243px;top:56px;width:827px;height:17px;background:#000"></div>
<div style="left:443px;top:56px;width:3px;height:17px;background:#333"></div>
<div style="left:621px;top:56px;width:3px;height:17px;background:#333"></div>
<div style="left:634px;top:56px;width:3px;height:17px;background:#333"></div>
<div style="left:777px;top:56px;width:3px;height:17px;background:#333"></div>
<div class="t" style="left:280px;top:58px;color:#00e6ff;font-size:12px;letter-spacing:.05px">TOSHIBA MK5065GSX</div>
<div class="t" style="left:488px;top:58px;color:#fff;font-size:12px;letter-spacing:.3px">SN: 71DZT016T</div>
<div class="t" style="left:625px;top:58px;color:#aaa;font-size:12px;font-weight:bold">x</div>
<div class="t" style="left:672px;top:58px;color:#00e000;font-size:12px;letter-spacing:.35px">Fw: GJ205E</div>
<div class="t" style="left:854px;top:58px;color:#ffff50;font-size:12px;letter-spacing:.25px">976773168 LBA (500 GB)</div>

<div style="left:243px;top:73px;width:827px;height:3px;background:#f0f0f0"></div>
<div style="left:243px;top:75px;width:827px;height:2px;background:#b0b0b0"></div>
<div style="left:244px;top:77px;width:826px;height:56px;background:linear-gradient(#fff,#e6e6e6)"></div>
<div style="left:243px;top:133px;width:827px;height:2px;background:#c0c0c0"></div>

<div class="btn" style="left:252px;top:81px;width:43px;height:33px"></div>
<div class="btn" style="left:336px;top:81px;width:43px;height:33px"></div>
<div class="btn" style="left:420px;top:81px;width:43px;height:33px"></div>
<div class="btn" style="left:504px;top:81px;width:43px;height:33px;background:#e5f1fb;border-color:#005499"></div>
<div class="btn" style="left:588px;top:81px;width:43px;height:33px"></div>
<div class="btn" style="left:944px;top:81px;width:43px;height:33px"></div>
<div class="btn" style="left:1018px;top:81px;width:43px;height:33px"></div>
<svg style="left:243px;top:78px" width="830" height="38" viewBox="0 0 830 38">
<path d="M19 8h21v18H22l-3 3z" fill="#6a9ae0" stroke="#3f6fb8"/><rect x="26" y="10" width="11" height="13" fill="#a8c8f0"/><text x="29.500" y="20" font-size="11" font-weight="bold" font-family="Liberation Serif" fill="#fff">i</text>
<rect x="105" y="7" width="5" height="17" rx="2.500" fill="#e8e8e8" stroke="#888"/><rect x="105.500" y="14" width="4" height="10" fill="#d83838"/>
<rect x="112" y="10" width="5" height="18" rx="2.500" fill="#e8e8e8" stroke="#888"/><rect x="112.500" y="17" width="4" height="11" fill="#3a78d8"/>
<rect x="120" y="12" width="5" height="18" rx="2.500" fill="#e8e8e8" stroke="#888"/><rect x="120.500" y="20" width="4" height="10" fill="#4ab84a"/>
<path d="M187 13l2-4h8l2 2h13v18h-25z" fill="#9cc8d4" stroke="#5a8a9a"/><path d="M187 14h25v3h-25z" fill="#d8e8ec"/><path d="M196 27l3-1 7-8 2 2-7 8z" fill="#f09030"/>
<path d="M268 10h32l3 3v15l-2 2h-34l-2-2V13z" fill="#f6f6f6" stroke="#c8c8c8"/><path d="M277 9h14v2h-14z" fill="#c0c0c0"/><path d="M281 15h4v4h4.500v4.500H285v4h-4v-4h-4.500V19H281z" fill="#2aa82a"/>
<path d="M351 6h30v20l-7 7h-23z" fill="#3a3a3a"/><rect x="353" y="8" width="26" height="21" fill="#d8d8d8"/><path d="M374 33v-7h7z" fill="#eee" stroke="#444"/>
<text x="354" y="13" font-size="6" font-family="Liberation Mono" font-weight="bold" fill="#111">010110</text><text x="354" y="19" font-size="6" font-family="Liberation Mono" font-weight="bold" fill="#111">110011</text><text x="354" y="25" font-size="6" font-family="Liberation Mono" font-weight="bold" fill="#111">101000</text><text x="354" y="31" font-size="6" font-family="Liberation Mono" font-weight="bold" fill="#111">0001</text>
<rect x="717" y="14" width="4" height="11" fill="#2090e8"/><rect x="724" y="14" width="4" height="11" fill="#2090e8"/>
<rect x="788" y="10" width="18" height="20" fill="#f44336"/><path d="M793 15l8 9M801 15l-8 9" stroke="#fff" stroke-width="2"/>
</svg>
<div style="left:483px;top:115px;width:88px;height:14px;background:#3d9bf5"></div>
<div class="t" style="left:258px;top:116px">Инфо</div>
<div class="t" style="left:328px;top:116px;letter-spacing:.2px">S.M.A.R.T</div>
<div class="t" style="left:413px;top:116px">Журналы</div>
<div class="t" style="left:487px;top:116px">Тестирование</div>
<div class="t" style="left:584px;top:116px">Редактор</div>
<div class="t" style="left:949px;top:116px">Пауза</div>
<div class="t" style="left:1026px;top:116px">Стоп</div>

<!-- grid panel -->
<div style="left:246px;top:140px;width:458px;height:383px;background:#fff;border:1px solid #a8a8a8"></div>
<div style="left:248px;top:143px;width:429px;height:340px;background:linear-gradient(90deg,transparent 10px,#fff 10px) 0 0/11px 20px,linear-gradient(180deg,transparent 19px,#fff 19px) 0 0/11px 20px,#e0e0e0"></div>
<div style="left:248px;top:483px;width:330px;height:19px;background:linear-gradient(90deg,transparent 10px,#fff 10px) 0 0/11px 20px,#e0e0e0"></div>
<div class="cell" style="left:601px;top:163px"></div>
<div class="cell" style="left:260px;top:403px"></div>
<div style="left:685px;top:141px;width:18px;height:381px;background:#f0f0f0"></div>
<div style="left:685px;top:487px;width:17px;height:18px;background:#cdcdcd"></div>
<svg style="left:685px;top:145px" width="17" height="10" fill="none" stroke="#555" stroke-width="1.500"><path d="M5 7l3.500-4L12 7"/></svg>
<svg style="left:685px;top:507px" width="17" height="10" fill="none" stroke="#555" stroke-width="1.500"><path d="M5 3l3.500 4L12 3"/></svg>

<!-- controls top -->
<div style="left:704px;top:138px;width:291px;height:156px;background:#d6d6d6;border:2px solid #f2f2f2"></div>
<div style="left:704px;top:290px;width:291px;height:5px;background:#b0b0b0"></div>
<div style="left:704px;top:295px;width:120px;height:227px;background:#d6d6d6;border-left:1px solid #a8a8a8"></div>
<div style="left:823px;top:295px;width:172px;height:227px;background:#d6d6d6;border-left:2px solid #f2f2f2"></div>

<div class="t br" style="left:713px;top:143px">[ End time ]</div>
<div class="t br" style="left:778px;top:143px">[Start LBA]</div>
<div class="sm" style="left:835px;top:143px;width:19px;height:13px;font-size:9px">CUR</div>
<div class="sm" style="left:858px;top:143px;width:19px;height:13px">0</div>
<div class="t br" style="left:886px;top:143px">[End LBA]</div>
<div class="sm" style="left:941px;top:143px;width:20px;height:13px;font-size:9px">CUR</div>
<div class="sm" style="left:966px;top:143px;width:25px;height:13px;font-size:9.500px">MAX</div>

<div style="left:711px;top:158px;width:60px;height:24px;background:#fff"></div>
<div class="t" style="left:719px;top:163px;font-size:14px;color:#666">2:24</div>
<div style="left:753px;top:161px;width:15px;height:9px;background:#eee"></div>
<div style="left:753px;top:171px;width:15px;height:9px;background:#eee"></div>
<svg style="left:753px;top:161px" width="15" height="19"><path d="M4 6l3.500-3L11 6zM4 13l3.500 3L11 13z" fill="#666"/></svg>
<div class="inp" style="left:778px;top:158px;width:100px;height:22px;color:#0a0a7a;font-size:14px">0</div>
<div class="inp" style="left:886px;top:158px;width:106px;height:22px;color:#0a0a7a">976773167</div>
<div class="inp" style="left:778px;top:184px;width:100px;height:22px;background:#e6e6e6;border-color:#aaa;color:#999">0</div>
<div class="inp" style="left:886px;top:184px;width:106px;height:22px;color:#7a0000">367689728</div>
<div class="cb" style="left:711px;top:188px;background:#f0f0f0;border-color:#ccc"></div>
<svg style="left:711px;top:188px" width="14" height="14" fill="none" stroke="#b0b0b0" stroke-width="1.300"><path d="M3 7l3 3 5-6"/></svg>
<div class="t g" style="left:730px;top:188px">Timer</div>

<div style="left:711px;top:218px;width:45px;height:37px;background:#e8e8e8;border:1px solid #bdbdbd"></div>
<div class="t" style="left:721px;top:229px;color:#f00;font-weight:bold;font-size:12px">Stop</div>
<div style="left:757px;top:218px;width:18px;height:37px;background:#c4c4c4;border:1px solid #d0d0d0"></div>
<svg style="left:757px;top:232px" width="18" height="10"><path d="M5 3h7L8.500 7z" fill="#888"/></svg>
<div style="left:710px;top:261px;width:66px;height:23px;background:#282828;border:2px solid #e8e8e8;outline:1px solid #aaa;outline-offset:-3px"></div>
<div class="t" style="left:722px;top:266px;color:#00e800;font-size:8px;line-height:12px;font-weight:bold">FULL SCAN</div>

<svg style="left:781px;top:212px" width="70" height="68" viewBox="0 0 70 68">
<path d="M34.500 1L68 34 34.500 67 1 34z" fill="#e4e4e4" stroke="#000"/>
<path d="M34.500 4L64.500 34 34.500 64 4.500 34z" fill="none" stroke="#fff"/>
<path d="M18 17.500L51 50.500M51 17.500L18 50.500" stroke="#000" stroke-width="3"/>
<path d="M18 17.500L51 50.500M51 17.500L18 50.500" stroke="#fff" stroke-width="1"/>
<path d="M34.500 10l3 5h-6z" fill="#0a7a1a"/><path d="M34.500 58l3-5h-6z" fill="#0a7a1a"/><path d="M10 34l5-3v6z" fill="#0a7a1a"/><path d="M59 34l-5-3v6z" fill="#0a7a1a"/>
</svg>

<div class="t br" style="left:861px;top:209px">[ block size ]</div>
<div class="t br" style="left:861px;top:223px">[ auto ]</div>
<div class="cb" style="left:900px;top:223px;width:13px;height:13px"></div>
<svg style="left:900px;top:223px" width="13" height="13" fill="none" stroke="#333" stroke-width="1.100"><path d="M3 6.500l3 3 4.500-6"/></svg>
<div class="t br" style="left:861px;top:242px">[ timeout,ms ]</div>
<div style="left:925px;top:211px;width:66px;height:21px;background:#fff"></div>
<div style="left:927px;top:213px;width:46px;height:17px;background:#ececec"></div>
<div class="t" style="left:928px;top:214px;color:#888;font-size:13px">2048</div>
<svg style="left:977px;top:218px" width="12" height="8" fill="none" stroke="#aaa" stroke-width="1.200"><path d="M1 1l5 5 5-5"/></svg>
<div style="left:924px;top:234px;width:68px;height:23px;background:#fff;border:1px solid #555"></div>
<div style="left:926px;top:236px;width:47px;height:19px;background:#ececec"></div>
<div class="t" style="left:927px;top:238px;font-size:13px">10000</div>
<svg style="left:977px;top:242px" width="12" height="8" fill="none" stroke="#333" stroke-width="1.200"><path d="M1 1l5 5 5-5"/></svg>
<div style="left:860px;top:261px;width:132px;height:24px;background:#dcdcdc;border:1px solid #aaa"></div>
<div class="t" style="left:864px;top:266px;font-size:13px;font-weight:bold">Завершить</div>
<svg style="left:977px;top:270px" width="12" height="8" fill="none" stroke="#333" stroke-width="1.200"><path d="M1 1l5 5 5-5"/></svg>

<!-- stats -->
<div class="lab" style="top:312px">25</div><div class="box" style="top:305px;background:#fff"></div><div class="t num" style="top:312px">179095</div>
<div class="lab" style="top:343px">100</div><div class="box" style="top:335px;background:#a8adb5"></div><div class="t num" style="top:343px">441</div>
<div class="lab" style="top:374px">250</div><div class="box" style="top:367px;background:#6c6c6c"></div><div class="t num" style="top:374px">2</div>
<div class="lab" style="top:404px">1,0s</div><div class="box" style="top:398px;background:#00e000"></div><div class="t num" style="top:404px">4</div>
<div class="lab" style="top:435px">3,0s</div><div class="box" style="top:429px;background:#ff8000"></div><div class="t num" style="top:435px">0</div>
<div class="lab" style="top:466px;left:691px">&gt;</div><div class="box" style="top:460px;background:#f00"></div><div class="t num" style="top:466px">0</div>
<div class="lab" style="top:494px;left:698px">Err</div><div class="box" style="top:490px;background:#00f;border:0;width:10px;height:18px;color:#fff;font-weight:bold;text-align:center;font-size:13px;line-height:18px">x</div><div class="t num" style="top:494px;color:#f00">0</div>

<!-- pale tooltip overlay -->
<div style="left:625px;top:329px;width:203px;height:22px;background:rgba(190,215,235,.32)"></div>
<div class="t" style="left:658px;top:333px;color:#c4d0d8;font-size:11px">Весь экран</div>

<div class="blk" style="left:828px;top:303px;width:85px;height:19px"></div>
<div class="t" style="left:833px;top:305px;color:#00e8f0;font-weight:bold;font-size:13px;letter-spacing:.2px">188,26 GB</div>
<div class="blk" style="left:926px;top:303px;width:64px;height:19px"></div>
<div class="t" style="left:932px;top:305px;color:#fff;font-size:15px">37,6&nbsp; %</div>
<div class="blk" style="left:828px;top:332px;width:85px;height:20px"></div>
<div class="t" style="left:833px;top:335px;color:#22aa44;font-weight:bold;font-size:13px;letter-spacing:.4px">75 MB/s</div>
<div class="rad d" style="left:926px;top:336px;background:#fff"></div><div class="t g" style="left:944px;top:335px">Вериф.</div>
<div class="rad d" style="left:926px;top:358px;background:#fff"></div><div class="dot" style="left:929px;top:361px;background:#aaa"></div><div class="t g" style="left:944px;top:358px">Чтение</div>
<div class="rad d" style="left:926px;top:381px;background:#fff"></div><div class="t g" style="left:944px;top:381px">Запись</div>
<div style="left:831px;top:363px;width:12px;height:12px;background:#fff"></div>
<div class="t g" style="left:848px;top:364px;letter-spacing:.1px">DDD (API)</div>

<div style="left:827px;top:404px;width:166px;height:32px;background:#c8c8c8;border-top:1px solid #aaa;border-bottom:2px solid #fff"></div>
<svg style="left:827px;top:404px" width="166" height="32" viewBox="0 0 166 32">
<rect x="8.500" y="6.500" width="24" height="19" fill="#d8d8d8" stroke="#f8f8f8"/><rect x="49.500" y="6.500" width="24" height="19" fill="#bdbdbd" stroke="#ddd"/><rect x="90.500" y="6.500" width="24" height="19" fill="#bdbdbd" stroke="#ddd"/><rect x="130.500" y="6.500" width="24" height="19" fill="#bdbdbd" stroke="#ddd"/>
<path d="M14 9v14l15-7z" fill="#18b018" stroke="#222"/>
<path d="M70 9v14l-15-7z" fill="#888" stroke="#222"/>
<path d="M93 10v12l6-6zM112 10v12l-6-6z" fill="#555" stroke="#111"/>
<text x="99" y="21" font-size="15" font-weight="bold" font-family="Liberation Sans" fill="#111">?</text>
<path d="M133 10v12l6-6zM152 10v12l-6-6z" fill="#555" stroke="#111"/><path d="M142.500 9v14" stroke="#111" stroke-width="2"/>
</svg>

<div style="left:827px;top:439px;width:166px;height:45px;background:#c8c8c8;border-top:1px solid #aaa"></div>
<div class="rad" style="left:834px;top:446px;border-color:#333"></div><div class="t" style="left:852px;top:446px">Игнор</div>
<div class="rad" style="left:915px;top:446px;border-color:#333"></div><div class="t" style="left:933px;top:446px">Стереть</div>
<div class="rad" style="left:834px;top:467px;border-color:#333"></div><div class="dot" style="left:837px;top:470px;background:#333"></div><div class="t" style="left:852px;top:468px">Починить</div>
<div class="rad" style="left:915px;top:467px;border-color:#333"></div><div class="t" style="left:933px;top:468px">Обновить</div>
<div style="left:827px;top:484px;width:166px;height:3px;background:#f2f2f2"></div>
<div style="left:827px;top:487px;width:166px;height:4px;background:#b0b0b0"></div>
<div style="left:827px;top:491px;width:166px;height:2px;background:#f2f2f2"></div>
<div class="cb" style="left:831px;top:501px;width:13px;height:13px"></div>
<svg style="left:831px;top:501px" width="13" height="13" fill="none" stroke="#333" stroke-width="1.100"><path d="M3 6.500l3 3 4.500-6"/></svg>
<div class="t" style="left:849px;top:501px;color:#0a0a7a;font-weight:bold">Grid</div>
<div style="left:884px;top:495px;width:108px;height:22px;background:radial-gradient(#0e3a0e 40%,#030803 50%) 0 0/2px 2px;border:1px solid #444"></div>
<div class="t" style="left:885px;top:499px;color:#8a7c00;font:bold 15px/15px 'Liberation Mono',monospace;letter-spacing:2.800px;opacity:.9">01:07:30</div>

<!-- right gray -->
<div style="left:998px;top:135px;width:72px;height:392px;background:#a4a4a4;border-left:2px solid #7e7e7e;border-top:2px solid #8e8e8e"></div>
<div class="rad d" style="left:1010px;top:144px;background:#d8d8d8;border-color:#ccc"></div><div class="dot" style="left:1013px;top:147px;background:#a0a0a0"></div>
<div class="t" style="left:1027px;top:144px;color:#7a7a7a">API</div>
<div class="rad d" style="left:1010px;top:167px;background:#f4f4f4;border-color:#ddd"></div>
<div class="t" style="left:1027px;top:167px;color:#7a7a7a">PIO</div>
<div style="left:1007px;top:195px;width:19px;height:10px;background:#8c8c8c;border:1px solid #222"></div>
<div class="side" style="top:226px">Sleep</div>
<div class="side" style="top:288px">Recall</div>
<div style="left:1005px;top:410px;width:27px;height:12px;background:#8c8c8c;border:1px solid #222;border-radius:2px;color:#b0b0b0;font:bold 10px/10px 'Liberation Sans';text-align:center">WR</div>
<div style="left:1037px;top:410px;width:27px;height:12px;background:#00d020;border:1px solid #222;border-radius:2px;color:#fff;font:bold 10px/10px 'Liberation Sans';text-align:center">RD</div>
<div class="side" style="top:479px">Passp</div>

<!-- log -->
<div style="left:243px;top:527px;width:827px;height:3px;background:#f8f8f8"></div>
<div style="left:243px;top:530px;width:755px;height:2px;background:#999"></div>
<div style="left:243px;top:532px;width:755px;height:123px;background:#f4f4f4"></div>
<div style="left:314px;top:532px;width:1px;height:123px;background:#e6e6e6"></div>
<div class="sep" style="top:552px"></div><div class="sep" style="top:572px"></div><div class="sep" style="top:592px"></div><div class="sep" style="top:612px"></div><div class="sep" style="top:632px"></div><div class="sep" style="top:652px"></div>
<div class="tm" style="top:536px">6:00:15</div><div class="log" style="top:536px;color:#f00">SMART status = BAD</div>
<div class="tm" style="top:556px">6:00:39</div><div class="log" style="top:556px;color:#222">Получение паспорта накопителя... OK</div>
<div class="tm" style="top:576px">6:00:40</div><div class="log" style="top:576px;color:#222">Get S.M.A.R.T. Log directory... OK.</div>
<div class="tm" style="top:596px">6:01:32</div><div class="log" style="top:596px;color:#222">Получение паспорта накопителя... OK</div>
<div class="tm" style="top:616px">6:01:33</div><div class="log" style="top:616px;color:#222">Recallibration... OK</div>
<div class="tm" style="top:636px">6:01:33</div><div class="log" style="top:636px;color:#1414ee">Starting Reading, LBA=0..976773167, FULL, sequential access w. REMAP, tio 10000ms</div>
<div style="left:980px;top:606px;width:16px;height:31px;background:#cdcdcd"></div>
<svg style="left:980px;top:536px" width="17" height="10" fill="none" stroke="#555" stroke-width="1.500"><path d="M5 7l3.500-4L12 7"/></svg>
<svg style="left:980px;top:642px" width="17" height="10" fill="none" stroke="#555" stroke-width="1.500"><path d="M5 3l3.500 4L12 3"/></svg>
<div style="left:998px;top:530px;width:72px;height:125px;background:#a8a8a8"></div>
<div class="cb" style="left:1007px;top:539px"></div><svg style="left:1007px;top:539px" width="14" height="14" fill="none" stroke="#333" stroke-width="1.100"><path d="M3 7l3 3 5-6"/></svg>
<div class="t" style="left:1024px;top:539px">Звук</div>
<div class="cb" style="left:1007px;top:562px"></div><svg style="left:1007px;top:562px" width="14" height="14" fill="none" stroke="#333" stroke-width="1.100"><path d="M3 7l3 3 5-6"/></svg>
<div class="t" style="left:1024px;top:562px">Hints</div>
</body></html>
